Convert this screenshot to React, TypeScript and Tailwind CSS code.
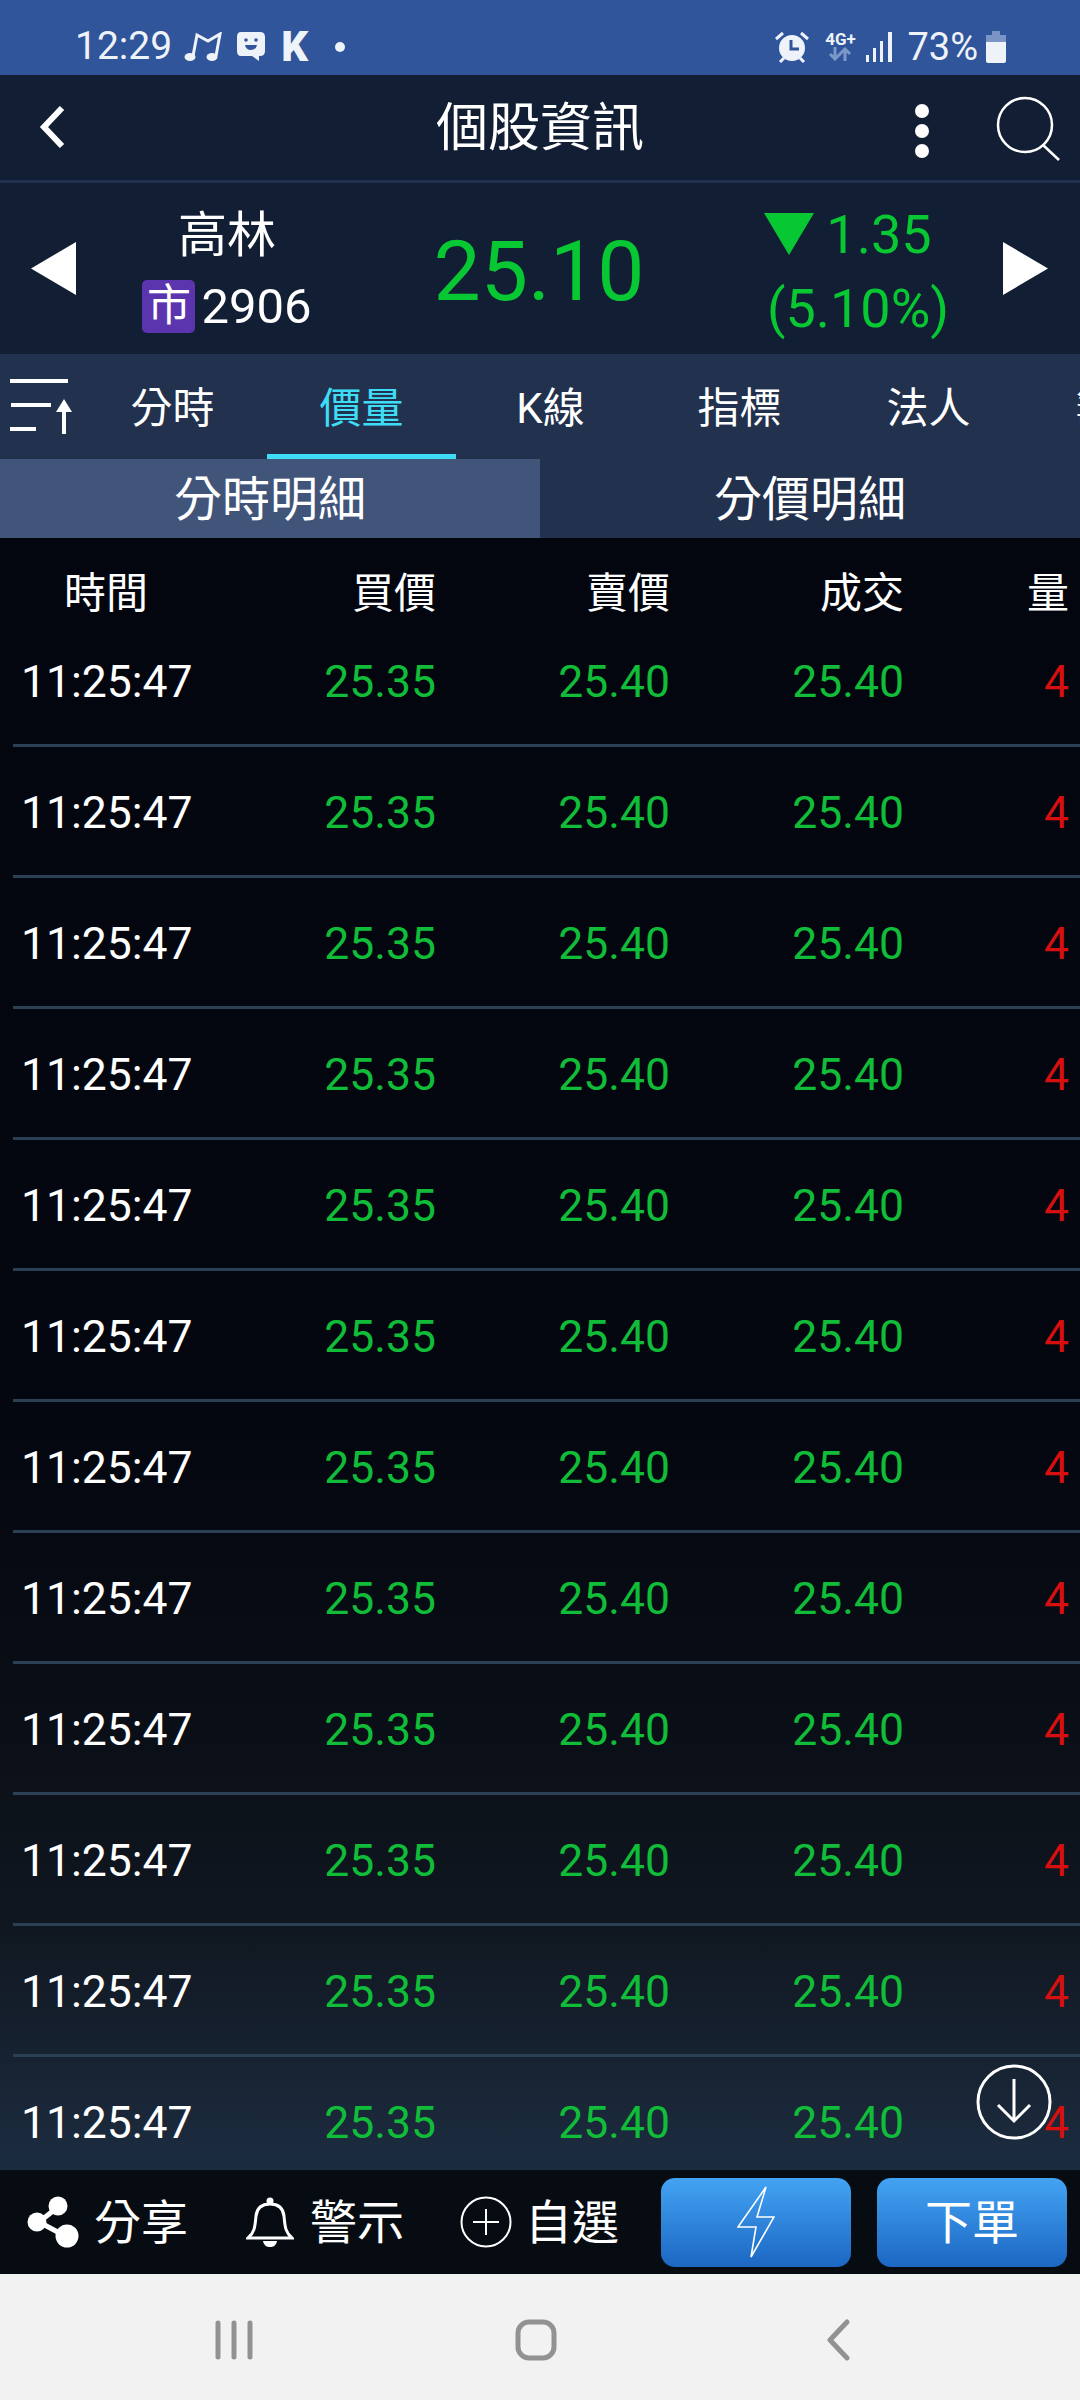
const TABS = ['分時', '價量', 'K線', '指標', '法人', '籌碼'];
const ROWS = Array.from({ length: 12 }, (_, i) => i);

function Triangle({ dir }: { dir: 'left' | 'right' }) {
  return (
    <svg width="45" height="53" viewBox="0 0 45 53" className="shrink-0">
      <path d={dir === 'left' ? 'M45 0V53L0 26.5Z' : 'M0 0V53L45 26.5Z'} fill="#fff" />
    </svg>
  );
}

function StatusBar() {
  return (
    <div className="h-[75px] shrink-0 bg-[#30559a] flex items-center pt-[18px] pl-[75px] pr-[73px] text-[#eef2f9] text-[39px] leading-none">
      <span>12:29</span>
      <svg width="38" height="30" viewBox="0 0 38 30" className="ml-[12px]" fill="none" stroke="#eef2f9" strokeWidth="3">
        <path d="M9 24L13 3L24 9L36 2L32 24" />
        <ellipse cx="6" cy="25" rx="5.5" ry="4" fill="#eef2f9" stroke="none" />
        <ellipse cx="28" cy="25" rx="5.5" ry="4" fill="#eef2f9" stroke="none" />
      </svg>
      <svg width="30" height="31" viewBox="0 0 30 31" className="ml-[14px]">
        <path d="M5 1H24Q29 1 29 6V20Q29 25 24 25H23L23 30L16 25H5Q1 25 1 20V6Q1 1 5 1Z" fill="#eef2f9" />
        <circle cx="10" cy="9" r="1.8" fill="#30559a" />
        <circle cx="20" cy="9" r="1.8" fill="#30559a" />
        <path d="M9 14H21Q20 19 15 19Q10 19 9 14Z" fill="#30559a" />
      </svg>
      <span className="ml-[15px] text-[42px] font-black">K</span>
      <span className="ml-[27px] w-[10px] h-[10px] rounded-full bg-[#eef2f9]" />
      <div className="ml-auto flex items-center">
        <svg width="34" height="32" viewBox="0 0 34 32">
          <circle cx="17" cy="17" r="13" fill="#eef2f9" />
          <path d="M1 8L8 2M33 8L26 2M5 31L9 27M29 31L25 27" stroke="#eef2f9" strokeWidth="3" />
          <path d="M16 9V18H24" stroke="#30559a" strokeWidth="3" fill="none" />
        </svg>
        <div className="ml-[15px] w-[32px] h-[32px] flex flex-col items-center">
          <span className="text-[17px] font-bold leading-[16px]">4G+</span>
          <svg width="24" height="14" viewBox="0 0 24 14" fill="none" stroke="#7d97c8" strokeWidth="3">
            <path d="M7 0V12M2 7L7 12L12 7M17 14V2M12 7L17 2L22 7" />
          </svg>
        </div>
        <svg width="28" height="30" viewBox="0 0 28 30" className="ml-[10px]" fill="#eef2f9">
          <rect x="0" y="23" width="3" height="7" />
          <rect x="7" y="16" width="3" height="14" />
          <rect x="14" y="9" width="3" height="21" />
          <rect x="22" y="0" width="4" height="30" />
        </svg>
        <span className="ml-[13px] text-[38px]">73%</span>
        <svg width="22" height="32" viewBox="0 0 22 32" className="ml-[7px]">
          <path d="M7 0H15V4H21V11H1V4H7Z" fill="#7a94c6" />
          <path d="M1 11H21V30Q21 32 19 32H3Q1 32 1 30Z" fill="#eef2f9" />
        </svg>
      </div>
    </div>
  );
}

function Header() {
  return (
    <div className="relative h-[108px] shrink-0 bg-[#121e33] border-b-[3px] border-[#22304f] flex items-center justify-center pt-[2px] text-white">
      <svg width="30" height="42" viewBox="0 0 30 42" className="absolute left-[37px] top-[31px]" fill="none" stroke="#fff" strokeWidth="6">
        <path d="M25 2L7 21L25 40" />
      </svg>
      <span className="text-[52px] leading-none">個股資訊</span>
      <div className="absolute left-[915px] top-[29px] flex flex-col gap-[6px]">
        <span className="w-[14px] h-[14px] rounded-full bg-white" />
        <span className="w-[14px] h-[14px] rounded-full bg-white" />
        <span className="w-[14px] h-[14px] rounded-full bg-white" />
      </div>
      <svg width="66" height="66" viewBox="0 0 66 66" className="absolute left-[996px] top-[21px]" fill="none" stroke="#fff" strokeWidth="2.5">
        <circle cx="29" cy="29" r="27" />
        <path d="M47 49L63 64" />
      </svg>
    </div>
  );
}

function StockInfo() {
  return (
    <div className="h-[171px] shrink-0 bg-[#121e33] flex items-center pl-[31px] text-white">
      <Triangle dir="left" />
      <div className="w-[302px] flex flex-col items-center pt-[3px]">
        <span className="text-[49px] leading-[58px]">高林</span>
        <div className="flex items-center mt-[15px] gap-[6px]">
          <span className="w-[53px] h-[53px] rounded-[5px] bg-[#5b35ae] text-[44px] leading-[53px] text-center">市</span>
          <span className="text-[49px] leading-[53px]">2906</span>
        </div>
      </div>
      <div className="w-[324px] text-center text-[84px] leading-none text-[#07c832] pt-[6px] -ml-[1px]">25.10</div>
      <div className="w-[302px] flex flex-col items-center text-[#07c832] text-[54px] leading-[62px] pt-[6px] pl-[12px]">
        <div className="flex items-center gap-[12px] -ml-[20px]">
          <svg width="50" height="42" viewBox="0 0 50 42" className="-mt-[2px]">
            <path d="M0 0H50L25 42Z" fill="#07c832" />
          </svg>
          <span>1.35</span>
        </div>
        <span className="mt-[12px]">(5.10%)</span>
      </div>
      <Triangle dir="right" />
    </div>
  );
}

function Tabs() {
  return (
    <div className="relative h-[105px] shrink-0 bg-[#22314d] flex overflow-hidden text-white text-[42px]">
      <svg width="66" height="60" viewBox="0 0 66 60" className="absolute left-[10px] top-[25px]" fill="#fff">
        <rect x="0" y="0" width="58" height="4" />
        <rect x="1" y="24" width="40" height="4" />
        <rect x="0" y="48" width="26" height="4" />
        <path d="M52 33H56V55H52V33ZM46 33L54 20L62 33Z" />
      </svg>
      <div className="flex pl-[78px]">
        {TABS.map((tab, i) => (
          <div
            key={tab}
            className={`w-[189px] shrink-0 h-full flex items-center justify-center pt-[8px] border-b-[5px] ${
              i === 1 ? 'text-[#3fdcf5] border-[#3fdcf5]' : 'border-transparent'
            }`}
          >
            {tab}
          </div>
        ))}
      </div>
    </div>
  );
}

function SubTabs() {
  return (
    <div className="h-[79px] shrink-0 flex text-white text-[48px] leading-none">
      <div className="w-[540px] bg-[#41557a] flex items-center justify-center pt-[3px]">分時明細</div>
      <div className="w-[540px] bg-[#22314d] flex items-center justify-center pt-[3px]">分價明細</div>
    </div>
  );
}

function Table() {
  return (
    <div className="relative flex-1 min-h-0 overflow-hidden bg-[linear-gradient(180deg,#03060f_0%,#04070f_55%,#0a0e16_72%,#101720_85%,#1c2c40_100%)]">
      <div className="h-[78px] pt-[34px] grid grid-cols-[212px_224px_234px_234px_1fr] items-center text-white text-[42px] leading-none">
        <span className="text-center">時間</span>
        <span className="text-right">買價</span>
        <span className="text-right">賣價</span>
        <span className="text-right">成交</span>
        <span className="text-right pr-[11px]">量</span>
      </div>
      {ROWS.map(i => (
        <div key={i} className="relative h-[131px] grid grid-cols-[212px_224px_234px_234px_1fr] items-center text-[44.5px] leading-none pt-[2px]">
          <span className="text-white pl-[21px]">11:25:47</span>
          <span className="text-right text-[#10bc38]">25.35</span>
          <span className="text-right text-[#10bc38]">25.40</span>
          <span className="text-right text-[#10bc38]">25.40</span>
          <span className="text-right pr-[11px] text-[#d80f0f]">4</span>
          <div className="absolute left-[13px] right-0 bottom-0 h-[3px] bg-[#2b3f55]" />
        </div>
      ))}
      <svg width="76" height="76" viewBox="0 0 76 76" className="absolute left-[976px] top-[1526px]" fill="none" stroke="#fff" strokeWidth="3">
        <circle cx="38" cy="38" r="36" />
        <path d="M38 15V57M22 41L38 57L54 41" />
      </svg>
    </div>
  );
}

function BottomBar() {
  return (
    <div className="h-[104px] shrink-0 bg-[#060c11] flex items-center pl-[27px] text-white text-[47px] leading-none">
      <svg width="52" height="52" viewBox="0 0 52 52" fill="#fff" stroke="#fff">
        <path d="M12 26L31 11M12 26L40 41" strokeWidth="5" fill="none" />
        <circle cx="31" cy="10" r="9.5" stroke="none" />
        <circle cx="10" cy="26" r="9.5" stroke="none" />
        <circle cx="40" cy="40" r="11.5" stroke="none" />
      </svg>
      <span className="ml-[15px]">分享</span>
      <svg width="48" height="52" viewBox="0 0 48 52" className="ml-[58px]" fill="none" stroke="#fff" strokeWidth="3">
        <path d="M2 42C9 36 9 30 10 20C11 11 16 8 24 8C32 8 37 11 38 20C39 30 39 36 46 42Z" />
        <circle cx="24" cy="5" r="3.5" fill="#fff" stroke="none" />
        <path d="M17 45H31C30 50 27 51 24 51C21 51 18 50 17 45Z" fill="#fff" stroke="none" />
      </svg>
      <span className="ml-[16px]">警示</span>
      <svg width="52" height="52" viewBox="0 0 52 52" className="ml-[56px]" fill="none" stroke="#fff" strokeWidth="2">
        <circle cx="26" cy="26" r="24.5" />
        <path d="M26 13V39M13 26H39" />
      </svg>
      <span className="ml-[13px]">自選</span>
      <div className="ml-auto mr-[13px] flex gap-[26px]">
        <button className="w-[190px] h-[89px] rounded-[14px] bg-[linear-gradient(180deg,#43a3f3,#1c67c2)] flex items-center justify-center">
          <svg width="38" height="72" viewBox="0 0 38 72" fill="none" stroke="#fff" strokeWidth="1.6">
            <path d="M29 1L1 41H19L14 71L37 31H20Z" />
          </svg>
        </button>
        <button className="w-[190px] h-[89px] rounded-[14px] bg-[linear-gradient(180deg,#43a3f3,#1c67c2)] flex items-center justify-center text-[47px] text-white">
          下單
        </button>
      </div>
    </div>
  );
}

function NavBar() {
  return (
    <div className="h-[126px] shrink-0 bg-[#f2f2f2] pl-[83px] pt-[6px] grid grid-cols-[302px_302px_302px] items-center justify-items-center">
      <svg width="38" height="40" viewBox="0 0 38 40" stroke="#929292" strokeWidth="5" strokeLinecap="round">
        <path d="M3 3V37M19 3V37M35 3V37" />
      </svg>
      <svg width="42" height="42" viewBox="0 0 42 42" fill="none" stroke="#929292" strokeWidth="5">
        <rect x="3" y="3" width="36" height="36" rx="11" />
      </svg>
      <svg width="24" height="42" viewBox="0 0 24 42" fill="none" stroke="#929292" strokeWidth="5" strokeLinecap="round" strokeLinejoin="round">
        <path d="M21 3L4 21L21 39" />
      </svg>
    </div>
  );
}

export default function App() {
  return (
    <div className="w-[1080px] h-[2400px] flex flex-col overflow-hidden font-['Roboto','Noto_Sans_CJK_TC',sans-serif]">
      <StatusBar />
      <Header />
      <StockInfo />
      <Tabs />
      <SubTabs />
      <Table />
      <BottomBar />
      <NavBar />
    </div>
  );
}
